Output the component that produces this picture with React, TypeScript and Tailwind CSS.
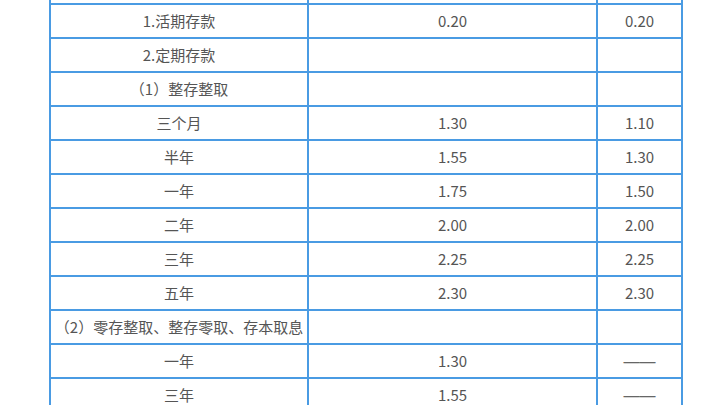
const rows: [string, string, string][] = [
  ["", "", ""],
  ["1.活期存款", "0.20", "0.20"],
  ["2.定期存款", "", ""],
  ["（1）整存整取", "", ""],
  ["三个月", "1.30", "1.10"],
  ["半年", "1.55", "1.30"],
  ["一年", "1.75", "1.50"],
  ["二年", "2.00", "2.00"],
  ["三年", "2.25", "2.25"],
  ["五年", "2.30", "2.30"],
  ["（2）零存整取、整存零取、存本取息", "", ""],
  ["一年", "1.30", "——"],
  ["三年", "1.55", "——"],
];

export default function App() {
  return (
    <div
      className="w-[720px] h-[405px] overflow-hidden bg-white"
      style={{ fontFamily: '"Noto Sans CJK SC", "Noto Sans", sans-serif' }}
    >
      <table className="ml-[49px] mt-[-31px] w-[632px] table-fixed border-collapse text-[15px] text-[#555]">
        <colgroup>
          <col className="w-[258px]" />
          <col className="w-[289px]" />
          <col className="w-[85px]" />
        </colgroup>
        <tbody>
          {rows.map((r, i) => (
            <tr key={i} className="h-[34px]">
              {r.map((c, j) => (
                <td
                  key={j}
                  className="border-2 border-[#4a9be3] p-0 text-center leading-[20px] whitespace-nowrap"
                >
                  {c === "——" ? (
                    <span className="font-['Liberation_Sans',sans-serif] text-[16px] text-[#666]">
                      {c}
                    </span>
                  ) : (
                    c
                  )}
                </td>
              ))}
            </tr>
          ))}
        </tbody>
      </table>
    </div>
  );
}
